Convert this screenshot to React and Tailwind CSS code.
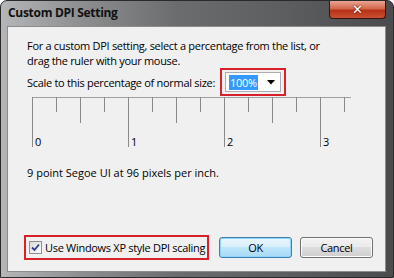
import React from "react";

function Ruler() {
  const ticks = [];
  for (let i = 0; i <= 13; i++) {
    const x = i * 24 + 0.5;
    const len = i % 4 === 0 ? 50 : i % 4 === 2 ? 26 : 15;
    ticks.push(<line key={i} x1={x} y1={0} x2={x} y2={len} stroke="#8a8a8a" strokeWidth="1" />);
  }
  return (
    <div className="relative w-[320px] h-[52px]">
      <svg width="320" height="52" className="absolute left-0 top-0">
        <line x1="0" y1="0.5" x2="319" y2="0.5" stroke="#a0a0a0" strokeWidth="1" />
        {ticks}
      </svg>
      <span className="absolute left-[3px] top-[38px] leading-[14px]">0</span>
      <span className="absolute left-[99px] top-[38px] leading-[14px]">1</span>
      <span className="absolute left-[195px] top-[38px] leading-[14px]">2</span>
      <span className="absolute left-[291px] top-[38px] leading-[14px]">3</span>
    </div>
  );
}

export default function App() {
  return (
    <div
      className="w-[394px] h-[278px] bg-white overflow-hidden"
      style={{ fontFamily: '"Open Sans", "Noto Sans", sans-serif' }}
    >
      <div className="w-[394px] h-[278px] rounded-t-[7px] flex flex-col border border-[#2a2a2a] bg-[linear-gradient(90deg,#b4b6b8_0%,#8e8f90_20%,#6b6c6d_45%,#5e5f60_70%,#4a4b4c_100%)] relative">
        {/* title bar */}
        <div className="h-[25px] flex items-start justify-between">
          <div className="pl-[7px] pt-[4px] text-[12px] leading-[16px] font-bold tracking-[-0.3px] text-[#111]">Custom DPI Setting</div>
          <div className="mr-[7px] w-[57px] h-[18px] rounded-b-[4px] border border-[#3a1010] border-t-0 bg-[linear-gradient(180deg,#e9a493_0%,#d3674c_45%,#b8321a_55%,#c9502f_100%)] flex items-center justify-center">
            <span className="text-white font-bold text-[13px] leading-none [text-shadow:0_0_2px_#400]" style={{ fontFamily: '"DejaVu Sans", sans-serif' }}>✕</span>
          </div>
        </div>
        {/* content panel */}
        <div className="ml-[6px] mr-[7px] h-[246px] border border-[#8a8c8e] bg-[#f0f0f0] flex flex-col text-[11px] tracking-[-0.3px] leading-[15px] text-black">
          <div className="pl-[19px] pt-[11px]">
            <div>For a custom DPI setting, select a percentage from the list, or</div>
            <div>drag the ruler with your mouse.</div>
          </div>
          <div className="pl-[19px] mt-0 flex items-center">
            <span>Scale to this percentage of normal size:</span>
            <div className="ml-[5px] w-[66px] h-[28px] border-2 border-[#d8202a] flex items-center justify-center">
              <div className="w-[56px] h-[20px] border border-[#abadb3] bg-white flex items-center pl-[3px]">
                <span className="bg-[#3399ff] text-white px-[1px] leading-[15px]">100%</span>
                <svg width="8" height="5" className="ml-auto mr-[5px]"><path d="M0 0 L8 0 L4 4.5 Z" fill="#000" /></svg>
              </div>
            </div>
          </div>
          <div className="pl-[24px] mt-[1px]">
            <Ruler />
          </div>
          <div className="pl-[19px] mt-[16px] tracking-[0px]">9 point Segoe UI at 96 pixels per inch.</div>
          <div className="mt-auto mb-[11px] pl-[16px] flex items-center">
            <div className="w-[185px] h-[25px] border-2 border-[#d8202a] flex items-center pl-[3px]">
              <div className="w-[13px] h-[13px] border border-[#8e8f8f] bg-[linear-gradient(135deg,#dcdcdc,#fafafa)] flex items-center justify-center">
                <svg width="9" height="9" viewBox="0 0 9 9"><path d="M1 4.5 L3.5 7 L8 1.5" stroke="#2a3f8f" strokeWidth="1.8" fill="none" /></svg>
              </div>
              <span className="ml-[3px] whitespace-nowrap">Use Windows XP style DPI scaling</span>
            </div>
            <button className="ml-[10px] w-[73px] h-[21px] rounded-[3px] border border-[#3c7fb1] bg-[linear-gradient(180deg,#eaf6fd_0%,#d9f0fc_45%,#bee6fd_50%,#a7d9f5_100%)] shadow-[inset_0_0_0_1px_#8fd3ff] leading-none">OK</button>
            <button className="ml-[8px] w-[73px] h-[21px] rounded-[3px] border border-[#707070] bg-[linear-gradient(180deg,#f2f2f2_0%,#ebebeb_45%,#dddddd_50%,#cfcfcf_100%)] shadow-[inset_0_0_0_1px_#fcfcfc] leading-none">Cancel</button>
          </div>
        </div>
      </div>
    </div>
  );
}
